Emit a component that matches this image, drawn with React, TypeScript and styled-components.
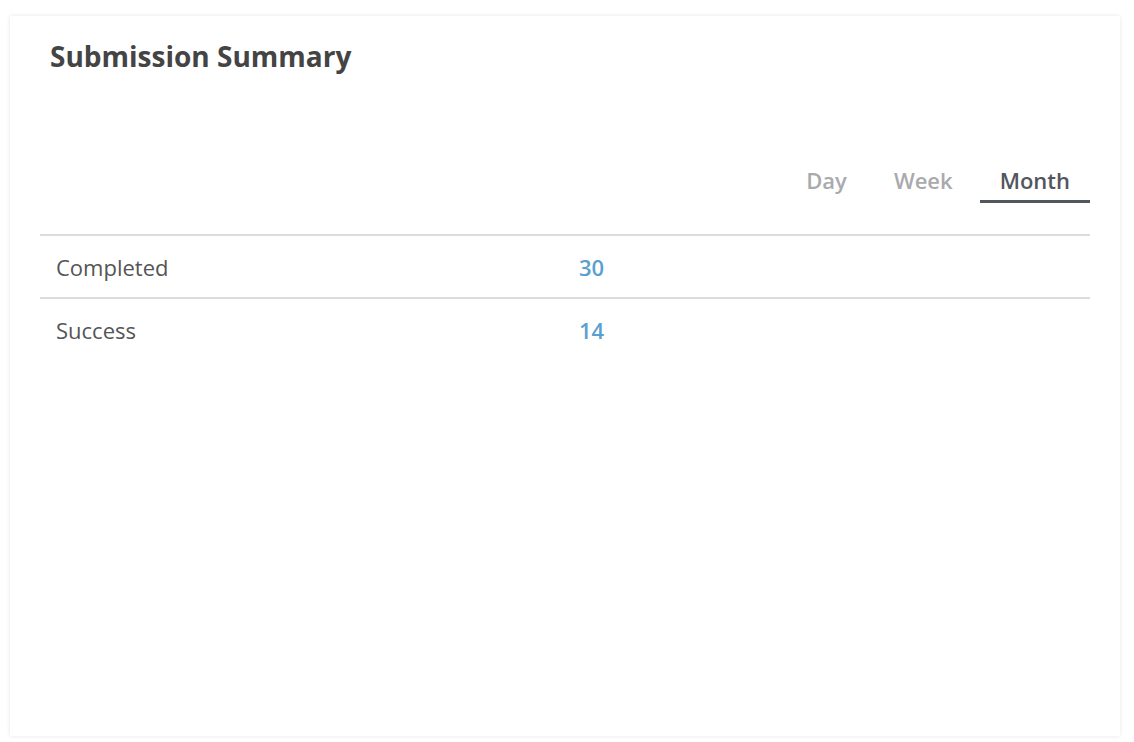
import React, { FC, useState } from 'react';
import styled, { createGlobalStyle } from 'styled-components';

const GlobalStyle = createGlobalStyle`
  html, body {
    margin: 0;
    padding: 0;
    background: #ffffff;
    font-family: 'Open Sans', 'Liberation Sans', sans-serif;
  }
`;

const Page = styled.div`
  padding: 16px 14px 6px 10px;
`;

const Card = styled.section`
  box-sizing: border-box;
  height: 720px;
  background: #fff;
  box-shadow: 0 0 4px rgba(0, 0, 0, 0.1);
  padding: 0 30px;
`;

const Title = styled.h2`
  margin: 0;
  padding: 21px 10px 0;
  font-size: 28px;
  line-height: 38px;
  font-weight: 700;
  color: #444;
`;

const Tabs = styled.div`
  display: flex;
  justify-content: flex-end;
  gap: 7px;
  margin-top: 90px;
`;

const Tab = styled.button<{ active?: boolean }>`
  border: 0;
  background: none;
  font-family: inherit;
  font-size: 22px;
  font-weight: 600;
  line-height: 30px;
  padding: 0 20px 5px;
  color: ${({ active }) => (active ? '#52565e' : '#a9aaad')};
  border-bottom: 3px solid ${({ active }) => (active ? '#52565e' : 'transparent')};
  cursor: pointer;
`;

const Table = styled.div`
  margin-top: 31px;
  border-top: 2px solid #dcdcdc;
`;

const Row = styled.div`
  display: grid;
  grid-template-columns: 1fr 1fr;
  height: 61px;
  align-items: center;
  & + & {
    border-top: 2px solid #dcdcdc;
  }
`;

const Label = styled.span`
  padding-left: 16px;
  font-size: 22px;
  color: #555;
`;

const Value = styled.span`
  padding-left: 14px;
  font-size: 22px;
  font-weight: 600;
  color: #5aa0cf;
`;

const periods = ['Day', 'Week', 'Month'];

const rows = [
  { label: 'Completed', value: 30 },
  { label: 'Success', value: 14 },
];

const App: FC = () => {
  const [period, setPeriod] = useState('Month');

  return (
    <Page>
      <GlobalStyle />
      <Card>
        <Title>Submission Summary</Title>
        <Tabs>
          {periods.map((p) => (
            <Tab key={p} active={p === period} onClick={() => setPeriod(p)}>
              {p}
            </Tab>
          ))}
        </Tabs>
        <Table>
          {rows.map((r) => (
            <Row key={r.label}>
              <Label>{r.label}</Label>
              <Value>{r.value}</Value>
            </Row>
          ))}
        </Table>
      </Card>
    </Page>
  );
};

export default App;
